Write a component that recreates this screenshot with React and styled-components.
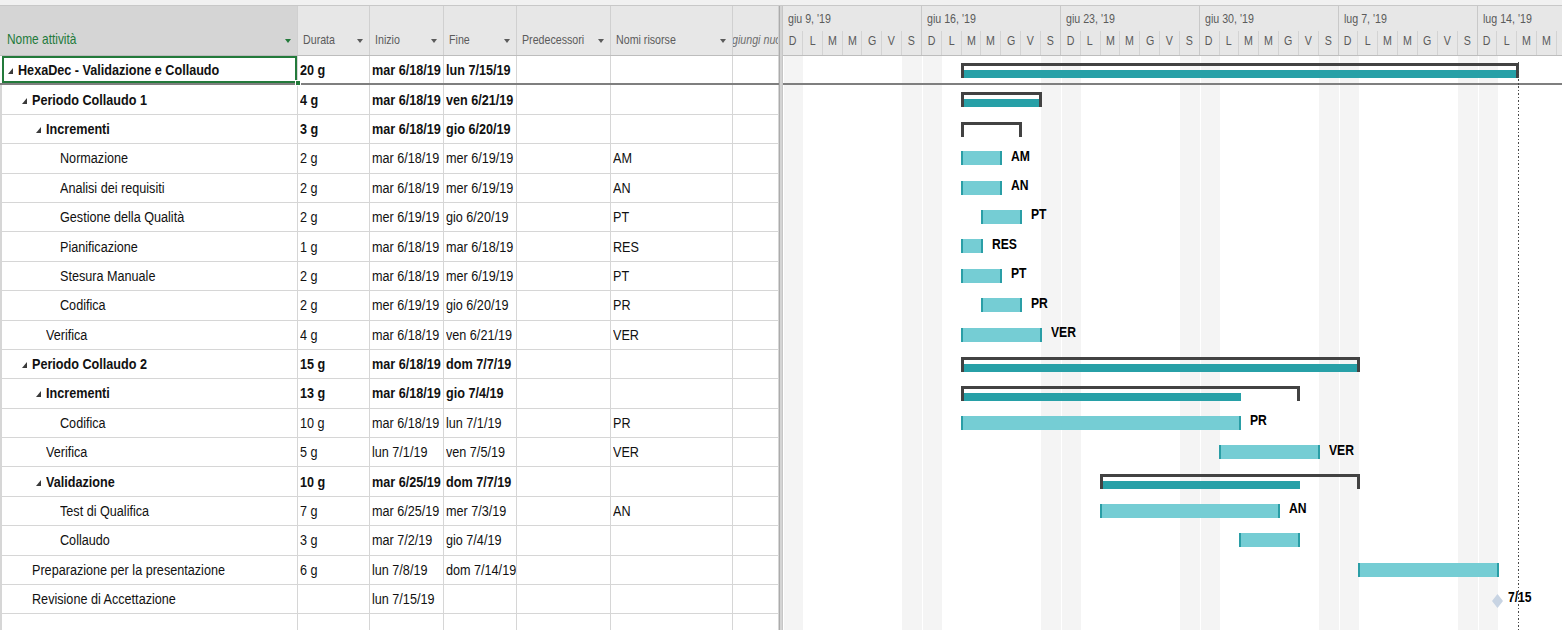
import React from 'react';
import styled, { createGlobalStyle, css } from 'styled-components';

const FONT = `"Liberation Sans", Arial, sans-serif`;

const GlobalStyle = createGlobalStyle`
  html, body { margin: 0; padding: 0; background: #fff; }
  body { font-family: ${FONT}; }
  *, *::before, *::after { box-sizing: border-box; }
`;

const ROW_H = 29.4;
const DAY = 139 / 7;
const COLS = '298px 72px 74px 73px 94px 122px 46px';
const GREEN = '#237a3b';
const NARROW = 0.82;
const dx = (d) => d * DAY;

const rows = [
  { name: 'HexaDec - Validazione e Collaudo', level: 0, summary: true, dur: '20 g', start: 'mar 6/18/19', end: 'lun 7/15/19', res: '', bar: { kind: 'summary', s: 9, e: 37, t: 37 } },
  { name: 'Periodo Collaudo 1', level: 1, summary: true, dur: '4 g', start: 'mar 6/18/19', end: 'ven 6/21/19', res: '', bar: { kind: 'summary', s: 9, e: 13, t: 13 } },
  { name: 'Incrementi', level: 2, summary: true, dur: '3 g', start: 'mar 6/18/19', end: 'gio 6/20/19', res: '', bar: { kind: 'summary', s: 9, e: 12 } },
  { name: 'Normazione', level: 3, dur: '2 g', start: 'mar 6/18/19', end: 'mer 6/19/19', res: 'AM', bar: { kind: 'task', s: 9, e: 11, label: 'AM' } },
  { name: 'Analisi dei requisiti', level: 3, dur: '2 g', start: 'mar 6/18/19', end: 'mer 6/19/19', res: 'AN', bar: { kind: 'task', s: 9, e: 11, label: 'AN' } },
  { name: 'Gestione della Qualità', level: 3, dur: '2 g', start: 'mer 6/19/19', end: 'gio 6/20/19', res: 'PT', bar: { kind: 'task', s: 10, e: 12, label: 'PT' } },
  { name: 'Pianificazione', level: 3, dur: '1 g', start: 'mar 6/18/19', end: 'mar 6/18/19', res: 'RES', bar: { kind: 'task', s: 9, e: 10, label: 'RES' } },
  { name: 'Stesura Manuale', level: 3, dur: '2 g', start: 'mar 6/18/19', end: 'mer 6/19/19', res: 'PT', bar: { kind: 'task', s: 9, e: 11, label: 'PT' } },
  { name: 'Codifica', level: 3, dur: '2 g', start: 'mer 6/19/19', end: 'gio 6/20/19', res: 'PR', bar: { kind: 'task', s: 10, e: 12, label: 'PR' } },
  { name: 'Verifica', level: 2, dur: '4 g', start: 'mar 6/18/19', end: 'ven 6/21/19', res: 'VER', bar: { kind: 'task', s: 9, e: 13, label: 'VER' } },
  { name: 'Periodo Collaudo 2', level: 1, summary: true, dur: '15 g', start: 'mar 6/18/19', end: 'dom 7/7/19', res: '', bar: { kind: 'summary', s: 9, e: 29, t: 29 } },
  { name: 'Incrementi', level: 2, summary: true, dur: '13 g', start: 'mar 6/18/19', end: 'gio 7/4/19', res: '', bar: { kind: 'summary', s: 9, e: 26, t: 23 } },
  { name: 'Codifica', level: 3, dur: '10 g', start: 'mar 6/18/19', end: 'lun 7/1/19', res: 'PR', bar: { kind: 'task', s: 9, e: 23, label: 'PR' } },
  { name: 'Verifica', level: 2, dur: '5 g', start: 'lun 7/1/19', end: 'ven 7/5/19', res: 'VER', bar: { kind: 'task', s: 22, e: 27, label: 'VER' } },
  { name: 'Validazione', level: 2, summary: true, dur: '10 g', start: 'mar 6/25/19', end: 'dom 7/7/19', res: '', bar: { kind: 'summary', s: 16, e: 29, t: 26 } },
  { name: 'Test di Qualifica', level: 3, dur: '7 g', start: 'mar 6/25/19', end: 'mer 7/3/19', res: 'AN', bar: { kind: 'task', s: 16, e: 25, label: 'AN' } },
  { name: 'Collaudo', level: 3, dur: '3 g', start: 'mar 7/2/19', end: 'gio 7/4/19', res: '', bar: { kind: 'task', s: 23, e: 26 } },
  { name: 'Preparazione per la presentazione', level: 1, dur: '6 g', start: 'lun 7/8/19', end: 'dom 7/14/19', res: '', bar: { kind: 'task', s: 29, e: 36 } },
  { name: 'Revisione di Accettazione', level: 1, dur: '', start: 'lun 7/15/19', end: '', res: '', bar: { kind: 'milestone', s: 36, label: '7/15' } },
  { name: '', level: 0, dur: '', start: '', end: '', res: '', empty: true },
];

const weeks = ["giu 9, '19", "giu 16, '19", "giu 23, '19", "giu 30, '19", "lug 7, '19", "lug 14, '19"];
const dayLetters = ['D', 'L', 'M', 'M', 'G', 'V', 'S'];

/* condensed text: the reference font is a narrow face */
const Narrow = styled.span`
  display: inline-block;
  flex: none;
  white-space: nowrap;
  transform: scaleX(${NARROW});
  transform-origin: ${(p) => p.$origin || 'left'} center;
`;

const Page = styled.div`
  width: 1562px;
  height: 630px;
  overflow: hidden;
  display: flex;
  flex-direction: column;
  background: #fff;
`;

const TopStrip = styled.div`
  flex: none;
  height: 6px;
  background: #f1f1f1;
  border-bottom: 1px solid #c8c8c8;
`;

const Main = styled.div`
  flex: 1;
  min-height: 0;
  display: flex;
  overflow: hidden;
`;

const TablePane = styled.div`
  flex: none;
  width: 779px;
  display: flex;
  flex-direction: column;
  overflow: hidden;
`;

const Splitter = styled.div`
  flex: none;
  width: 4px;
  background: #d4d4d4;
  border-left: 1px solid #ababab;
  border-right: 1px solid #c6c6c6;
`;

const GanttPane = styled.div`
  flex: 1;
  min-width: 0;
  display: flex;
  flex-direction: column;
  overflow: hidden;
`;

const TableHeader = styled.div`
  flex: none;
  display: grid;
  grid-template-columns: ${COLS};
  height: 50px;
  border-bottom: 1px solid #bdbdbd;
`;

const HeaderCell = styled.div`
  position: relative;
  display: flex;
  align-items: flex-end;
  padding: 0 0 7px 5px;
  background: #e7e7e7;
  border-right: 1px solid #d0d0d0;
  color: #5b5b5b;
  font-size: 13px;
  line-height: 17px;
  white-space: nowrap;
  overflow: hidden;
  ${(p) =>
    p.$primary &&
    css`
      background: #d5d5d5;
      color: ${GREEN};
      font-size: 14.5px;
      padding-left: 7px;
    `}
`;

const AddColumnCell = styled(HeaderCell)`
  padding: 0 0 7px 0;
  font-style: italic;
  color: #6e6e6e;
`;

const AddColumnText = styled(Narrow)`
  margin-left: -14px;
`;

const Arrow = styled.span`
  position: absolute;
  right: 6px;
  bottom: 12px;
  width: 0;
  height: 0;
  border-left: 3.5px solid transparent;
  border-right: 3.5px solid transparent;
  border-top: 4px solid currentColor;
`;

const TableBody = styled.div`
  flex: 1;
  display: flex;
  flex-direction: column;
`;

const Row = styled.div`
  flex: none;
  display: grid;
  grid-template-columns: ${COLS};
  height: ${ROW_H}px;
  border-bottom: 1px solid #d6d6d6;
  ${(p) =>
    p.$strong &&
    css`
      border-bottom: 2px solid #7f7f7f;
    `}
`;

const Cell = styled.div`
  display: flex;
  align-items: center;
  padding-left: 2px;
  border-right: 1px solid #d6d6d6;
  overflow: hidden;
  white-space: nowrap;
  font-size: 15.4px;
  color: #111;
  font-weight: ${(p) => (p.$bold ? 700 : 400)};
`;

const NameCell = styled(Cell)`
  position: relative;
  overflow: visible;
  padding-left: ${(p) => 5.5 + p.$level * 14.2}px;
  border-left: 2px solid #d6d6d6;
  ${(p) =>
    p.$selected &&
    css`
      z-index: 2;
      border-left-color: transparent;
      box-shadow: inset 0 0 0 2px ${GREEN};
      &::after {
        content: '';
        position: absolute;
        right: -4px;
        bottom: -3px;
        width: 6px;
        height: 6px;
        background: ${GREEN};
        border: 1px solid #fff;
      }
    `}
`;

const Toggle = styled.svg`
  flex: none;
  width: 5px;
  height: 6px;
  margin-right: 5px;
  margin-top: 2px;
  visibility: ${(p) => (p.$hidden ? 'hidden' : 'visible')};
`;

/* Gantt */
const GanttHeader = styled.div`
  flex: none;
  height: 50px;
  background: #e7e7e7;
  border-bottom: 1px solid #bdbdbd;
  display: flex;
  flex-direction: column;
  color: #5b5b5b;
  font-size: 13px;
`;

const WeekTier = styled.div`
  display: flex;
  height: 25px;
`;

const Week = styled.div`
  flex: none;
  width: ${7 * DAY}px;
  padding: 5px 0 0 5px;
  line-height: 16px;
  border-right: 1px solid #c9c9c9;
  white-space: nowrap;
`;

const DayTier = styled.div`
  display: flex;
  flex: 1;
`;

const Day = styled.div`
  flex: none;
  width: ${DAY}px;
  display: flex;
  justify-content: center;
  align-items: center;
  padding-bottom: 6px;
  border-right: 1px solid ${(p) => (p.$weekEnd ? '#c9c9c9' : '#d3d3d3')};
`;

const GanttBody = styled.div`
  flex: 1;
  position: relative;
  display: flex;
  flex-direction: column;
  background: repeating-linear-gradient(
    to right,
    #ffffff 0px,
    #ffffff 1px,
    #f4f4f4 1px,
    #f4f4f4 ${DAY}px,
    #ffffff ${DAY}px,
    #ffffff ${6 * DAY}px,
    #f4f4f4 ${6 * DAY}px,
    #f4f4f4 ${7 * DAY}px
  );
`;

const GanttRow = styled.div`
  flex: none;
  position: relative;
  height: ${ROW_H}px;
  ${(p) =>
    p.$strong &&
    css`
      border-bottom: 2px solid #7f7f7f;
    `}
`;

const TaskBar = styled.div`
  position: absolute;
  top: 7px;
  height: 14px;
  background: #75cdd4;
  border-left: 2px solid #2a9ea6;
  border-right: 2px solid #2a9ea6;
`;

const SummaryFill = styled.div`
  position: absolute;
  top: 14px;
  height: 8px;
  background: #27a0a7;
`;

const SummaryBracket = styled.div`
  position: absolute;
  top: 7px;
  height: 15px;
  border-top: 3px solid #424242;
  border-left: 3px solid #424242;
  border-right: 3px solid #424242;
`;

const BarLabel = styled.span`
  position: absolute;
  top: 3.5px;
  line-height: 17px;
  font-size: 14.8px;
  font-weight: 700;
  color: #000;
  white-space: nowrap;
  transform: scaleX(${NARROW});
  transform-origin: left center;
`;

const Milestone = styled.svg`
  position: absolute;
  top: 9px;
  width: 11px;
  height: 14px;
`;

const Deadline = styled.div`
  position: absolute;
  top: 6px;
  bottom: 0;
  width: 1px;
  background: repeating-linear-gradient(to bottom, #4a4a4a 0px, #4a4a4a 1.5px, transparent 1.5px, transparent 3.5px);
`;

function GanttBar({ bar }) {
  if (!bar) return null;
  const left = dx(bar.s) - 1;
  if (bar.kind === 'milestone') {
    return (
      <>
        <Milestone style={{ left: dx(bar.s) - 5.5 }} viewBox="0 0 11 14">
          <polygon points="5.5,0 11,7 5.5,14 0,7" fill="#c8d4e3" />
        </Milestone>
        <BarLabel style={{ left: dx(bar.s) + 10 }}>{bar.label}</BarLabel>
      </>
    );
  }
  const width = dx(bar.e) - dx(bar.s) + 2;
  if (bar.kind === 'summary') {
    return (
      <>
        {bar.t && <SummaryFill style={{ left, width: dx(bar.t) - dx(bar.s) + 2 }} />}
        <SummaryBracket style={{ left, width }} />
      </>
    );
  }
  return (
    <>
      <TaskBar style={{ left, width }} />
      {bar.label && <BarLabel style={{ left: dx(bar.e) + 10 }}>{bar.label}</BarLabel>}
    </>
  );
}

const headers = ['Durata', 'Inizio', 'Fine', 'Predecessori', 'Nomi risorse'];

export default function App() {
  const days = Array.from({ length: 42 }, (_, i) => i);
  return (
    <>
      <GlobalStyle />
      <Page>
        <TopStrip />
        <Main>
          <TablePane>
            <TableHeader>
              <HeaderCell $primary>
                <Narrow>Nome attività</Narrow>
                <Arrow />
              </HeaderCell>
              {headers.map((h) => (
                <HeaderCell key={h}>
                  <Narrow>{h}</Narrow>
                  <Arrow />
                </HeaderCell>
              ))}
              <AddColumnCell>
                <AddColumnText>Aggiungi nuova colonna</AddColumnText>
              </AddColumnCell>
            </TableHeader>
            <TableBody>
              {rows.map((r, i) => (
                <Row key={i} $strong={i === 0}>
                  <NameCell $level={r.level} $bold={r.summary} $selected={i === 0}>
                    {!r.empty && (
                      <Toggle viewBox="0 0 5 6" $hidden={!r.summary}>
                        <polygon points="5,0 5,6 0,6" fill="#3a3a3a" />
                      </Toggle>
                    )}
                    <Narrow>{r.name}</Narrow>
                  </NameCell>
                  <Cell $bold={r.summary}>
                    <Narrow>{r.dur}</Narrow>
                  </Cell>
                  <Cell $bold={r.summary}>
                    <Narrow>{r.start}</Narrow>
                  </Cell>
                  <Cell $bold={r.summary}>
                    <Narrow>{r.end}</Narrow>
                  </Cell>
                  <Cell />
                  <Cell>
                    <Narrow>{r.res}</Narrow>
                  </Cell>
                  <Cell />
                </Row>
              ))}
            </TableBody>
          </TablePane>
          <Splitter />
          <GanttPane>
            <GanttHeader>
              <WeekTier>
                {weeks.map((w) => (
                  <Week key={w}>
                    <Narrow>{w}</Narrow>
                  </Week>
                ))}
              </WeekTier>
              <DayTier>
                {days.map((d) => (
                  <Day key={d} $weekEnd={d % 7 === 6}>
                    <Narrow $origin="center">{dayLetters[d % 7]}</Narrow>
                  </Day>
                ))}
              </DayTier>
            </GanttHeader>
            <GanttBody>
              {rows.map((r, i) => (
                <GanttRow key={i} $strong={i === 0}>
                  <GanttBar bar={r.bar} />
                </GanttRow>
              ))}
              <Deadline style={{ left: dx(37) }} />
            </GanttBody>
          </GanttPane>
        </Main>
      </Page>
    </>
  );
}
